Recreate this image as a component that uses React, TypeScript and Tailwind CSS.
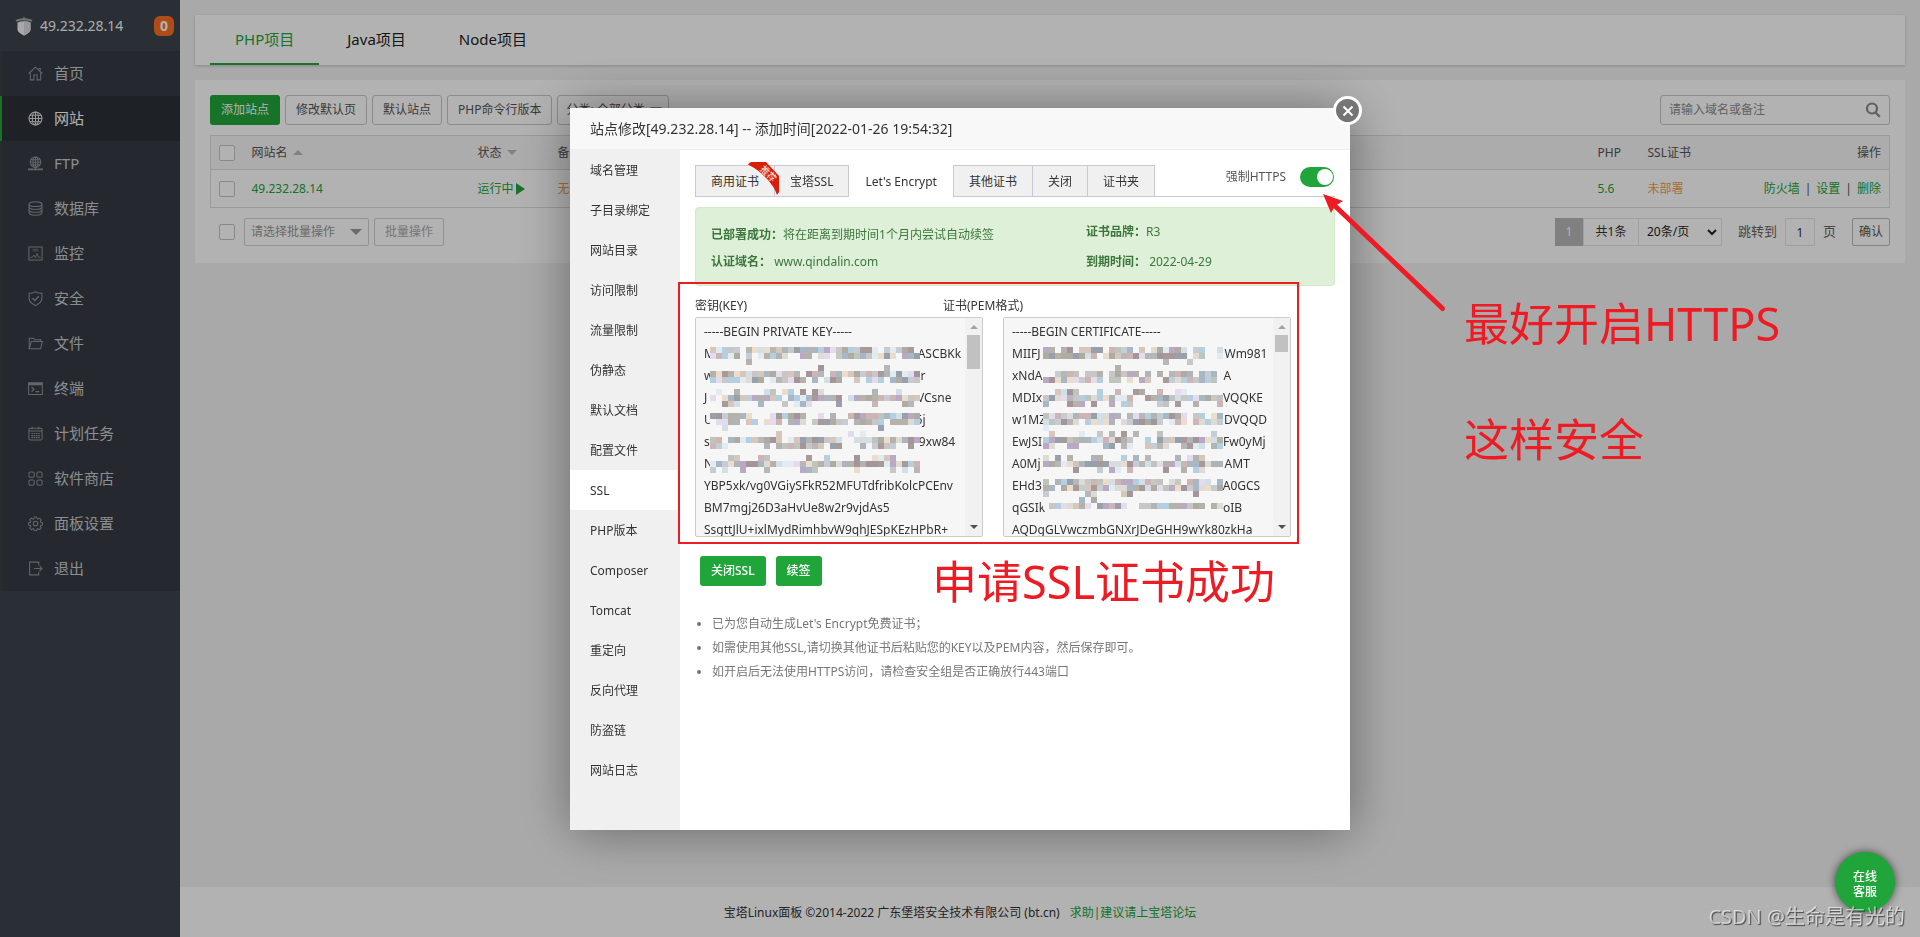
import React from "react";

const FONT = "font-['Noto_Sans','Noto_Sans_CJK_SC',sans-serif]";

const iconPaths: Record<string, React.ReactNode> = {
  home: (
    <>
      <path d="M0.7 8 8 1.2 15.3 8" />
      <path d="M2.5 7v7.8h3.8V9.6h3.4v5.2h3.8V7" />
      <path d="M11.3 2.6h1.7v2.2" />
    </>
  ),
  globe: (
    <>
      <circle cx="8" cy="8" r="6.9" />
      <ellipse cx="8" cy="8" rx="3.4" ry="6.9" />
      <path d="M8 1v14M1 8h14M2.2 4.6h11.6M2.2 11.4h11.6" />
    </>
  ),
  ftp: (
    <>
      <circle cx="8" cy="6.6" r="5.6" />
      <ellipse cx="8" cy="6.6" rx="2.7" ry="5.6" />
      <path d="M8 1v12.5M2.4 6.6h11.2M3.2 3.9h9.6M3.2 9.4h9.6" />
      <path d="M0 14.3h6M10 14.3h6M6.3 14.3h3.4" strokeWidth="1.8" />
    </>
  ),
  database: (
    <>
      <ellipse cx="8" cy="3.4" rx="6.9" ry="2.5" />
      <path d="M1.1 3.4v9.2c0 1.4 3.1 2.5 6.9 2.5s6.9-1.1 6.9-2.5V3.4" />
      <path d="M1.1 6.5c0 1.4 3.1 2.5 6.9 2.5s6.9-1.1 6.9-2.5M1.1 9.6c0 1.4 3.1 2.5 6.9 2.5s6.9-1.1 6.9-2.5" />
    </>
  ),
  monitor: (
    <>
      <path d="M1 1h14v14H1z" />
      <path d="M5 3.6h6M5 5.2h6" opacity=".5" />
      <path d="M2.5 12h2.300l1.400-2.500 1.800 3 1.700-4.500 1.500 4h2.300" strokeWidth=".9" />
    </>
  ),
  shield: (
    <>
      <path d="M8 .8c2 1.300 4.400 1.700 6.800 1.700v5.300c0 3.600-2.900 6-6.800 7.600-3.900-1.600-6.800-4-6.800-7.600V2.500C3.600 2.500 6 2.100 8 .8z" />
      <path d="m4.800 7.600 2.500 2.600 4.300-4.500" strokeWidth="1.500" />
    </>
  ),
  folder: (
    <>
      <path d="M1.300 13.600V2.500h4.500l1.500 1.600h6.200v1.700" />
      <path d="M1.300 13.600 3.600 5.800h11.800l-2 7.800z" />
    </>
  ),
  terminal: (
    <>
      <path d="M.7 1.800h14.600v12.600H.7z" />
      <path d="M.7 3.300h14.600" strokeWidth="2.600" />
      <path d="m3.800 6.600 2.600 2.300-2.600 2.300M8 11.300h4" strokeWidth="1.300" />
    </>
  ),
  calendar: (
    <>
      <rect x="1" y="2.300" width="14" height="12.600" rx="1.500" />
      <path d="M1 5.400h14M4.500.8v2.600M11.500.8v2.600" />
      <path d="M3.600 8h8.900M3.600 10.200h8.900M3.600 12.400h8.900" strokeWidth="1.300" strokeDasharray="1.700 .7" />
    </>
  ),
  apps: (
    <>
      <rect x="1" y="1" width="5.600" height="5.600" rx="1.400" />
      <rect x="9.500" y="1" width="5.600" height="5.600" rx="1.400" />
      <rect x="1" y="9.500" width="5.600" height="5.600" rx="1.400" />
      <rect x="9.500" y="9.500" width="5.600" height="5.600" rx="1.400" />
    </>
  ),
  gear: (
    <>
      <circle cx="8" cy="8" r="2.500" />
      <path d="M6.800 1h2.400l.5 1.900 1 .4 1.700-1 1.700 1.700-1 1.700.4 1 1.900.5v2.400l-1.900.5-.4 1 1 1.700-1.700 1.700-1.700-1-1 .4-.5 1.900H6.800l-.5-1.900-1-.4-1.700 1-1.700-1.700 1-1.700-.4-1L.6 9.600V7.200l1.900-.5.4-1-1-1.700 1.700-1.700 1.700 1 1-.4z" />
    </>
  ),
  exit: (
    <>
      <path d="M11.500 4.500V1.200H1.700v13.600h9.800v-3.300" />
      <path d="M6.500 8h8.500M12.300 5.300 15 8l-2.700 2.700" />
    </>
  ),
};

const menu = [
  ["home", "首页"],
  ["globe", "网站"],
  ["ftp", "FTP"],
  ["database", "数据库"],
  ["monitor", "监控"],
  ["shield", "安全"],
  ["folder", "文件"],
  ["terminal", "终端"],
  ["calendar", "计划任务"],
  ["apps", "软件商店"],
  ["gear", "面板设置"],
  ["exit", "退出"],
];

function Sidebar() {
  return (
    <aside className="w-[180px] shrink-0 bg-[#3c444d]">
      <div className="flex h-[51px] items-center pr-1.5 pl-[15px]">
        <svg className="h-5 w-[18px]" viewBox="0 0 18 20" aria-hidden="true">
          <path d="M9 .5 10 2.200c2.700.2 5.400.9 7.500 1.900l-1 1.700c-4-1.900-11-1.900-15 0l-1-1.700C2.600 3.100 5.300 2.400 8 2.200z" fill="#a4a8ac" />
          <path d="M2.500 6.500c4-1.600 9-1.600 13 0v6.700c0 2.800-3.200 4.600-6.500 6.300-3.300-1.700-6.500-3.500-6.500-6.300z" fill="#f2f2f2" />
          <path d="M9 5.300c2.300 0 4.500.4 6.500 1.200v6.700c0 2.800-3.200 4.600-6.500 6.300z" fill="#d8dadc" />
        </svg>
        <span className="ml-[7px] flex-1 text-sm leading-5 text-[#f4f4f4]">49.232.28.14</span>
        <span className="flex h-5 w-5 items-center justify-center rounded-md bg-[#fc6d22] text-sm font-bold text-white">0</span>
      </div>
      <nav className="bg-[#353c44]">
        {menu.map(([icon, label]) => (
          <a
            key={label}
            href="#"
            className={
              icon === "globe"
                ? "flex h-[45px] items-center border-l-2 border-[#20a53a] bg-[#2c3138] pl-[26px] text-[15px] text-white"
                : "flex h-[45px] items-center border-l-2 border-[#3c3f40] pl-[26px] text-[15px] text-[#c8cacc]"
            }
          >
            <svg
              className={icon === "globe" ? "h-[15px] w-[15px] text-[#ddd]" : "h-[15px] w-[15px] text-[#8f9294]"}
              viewBox="0 0 16 16"
              fill="none"
              stroke="currentColor"
              strokeWidth="1.1"
              aria-hidden="true"
            >
              {iconPaths[icon]}
            </svg>
            <span className="ml-[11px]">{label}</span>
          </a>
        ))}
      </nav>
    </aside>
  );
}

function Check({ label }: { label: string }) {
  return (
    <input
      type="checkbox"
      aria-label={label}
      className="block h-4 w-4 shrink-0 appearance-none rounded-xs border border-[#c5c5c5] bg-white"
    />
  );
}

const btn = "h-[30px] rounded-[3px] border border-[#c8c8c8] bg-white px-2.5 text-xs text-[#555]";

function SitePanel() {
  return (
    <section className="mt-[15px] bg-white p-[15px] pb-[17px] text-xs text-[#555]">
      <div className="flex items-center gap-[5px]">
        <button className="h-[30px] rounded-[3px] bg-[#20a53a] px-[11px] text-xs text-white">添加站点</button>
        <button className={btn}>修改默认页</button>
        <button className={btn}>默认站点</button>
        <button className={btn}>PHP命令行版本</button>
        <button className="flex h-[30px] w-28 items-center justify-between rounded-[3px] border border-[#c8c8c8] bg-white pr-1.5 pl-2 text-xs text-[#555]">
          分类: 全部分类
          <svg className="h-1.5 w-3" viewBox="0 0 12 6" fill="#888" aria-hidden="true"><path d="M0 0h12L6 6z" /></svg>
        </button>
        <div className="ml-auto flex h-[30px] w-[230px] items-center rounded-[3px] border border-[#c8c8c8] px-2">
          <input aria-label="搜索" placeholder="请输入域名或备注" className="min-w-0 flex-1 bg-transparent text-xs outline-none placeholder:text-[#8c8c8c]" />
          <svg className="h-4 w-4" viewBox="0 0 16 16" fill="none" stroke="#888" strokeWidth="2.200" aria-hidden="true">
            <circle cx="7" cy="6.500" r="5" />
            <path d="m10.500 10.500 4.300 4.300" />
          </svg>
        </div>
      </div>

      <table className="mt-2.5 w-full table-fixed border-collapse border border-[#ddd] text-left">
        <thead>
          <tr className="h-[34px] border-b border-[#ddd] bg-[#f6f6f6]">
            <th className="w-[33px] pl-2"><Check label="全选" /></th>
            <th className="w-[226px] pl-2 font-normal">
              <span className="inline-flex items-center gap-[5px]">网站名
                <svg className="h-[5px] w-2.5" viewBox="0 0 10 5" fill="#bbb" aria-hidden="true"><path d="M0 5h10L5 0z" /></svg>
              </span>
            </th>
            <th className="w-20 pl-2 font-normal">
              <span className="inline-flex items-center gap-[5px]">状态
                <svg className="h-[5px] w-2.5" viewBox="0 0 10 5" fill="#bbb" aria-hidden="true"><path d="M0 0h10L5 5z" /></svg>
              </span>
            </th>
            <th className="pl-2 font-normal">备注</th>
            <th className="w-[50px] pl-2 font-normal">PHP</th>
            <th className="w-[90px] pl-2 font-normal">SSL证书</th>
            <th className="w-40 pr-2 text-right font-normal">操作</th>
          </tr>
        </thead>
        <tbody>
          <tr className="h-[38px] text-[#20a53a]">
            <td className="pl-2"><Check label="选择 49.232.28.14" /></td>
            <td className="pl-2"><a href="#">49.232.28.14</a></td>
            <td className="pl-2">
              <a href="#" className="inline-flex items-center gap-0.5">运行中
                <svg className="h-3 w-[9px]" viewBox="0 0 9 12" fill="#20a53a" aria-hidden="true"><path d="M0 0v12l9-6z" /></svg>
              </a>
            </td>
            <td className="pl-2 text-[#e8a04c]">无备注</td>
            <td className="pl-2"><a href="#">5.6</a></td>
            <td className="pl-2"><a href="#" className="text-[#f0a04a]">未部署</a></td>
            <td className="pr-2">
              <div className="flex justify-end gap-[5px]">
                <a href="#">防火墙</a><span className="text-[#555]">|</span><a href="#">设置</a><span className="text-[#555]">|</span><a href="#">删除</a>
              </div>
            </td>
          </tr>
        </tbody>
      </table>

      <div className="mt-2.5 flex items-center">
        <div className="flex items-center gap-[5px] pl-[9px]">
          <Check label="批量选择" />
          <div className="relative ml-1">
            <select aria-label="批量操作" className="h-7 w-[125px] appearance-none rounded-xs border border-[#d0d0d0] bg-white pl-1.5 text-xs text-[#999]">
              <option>请选择批量操作</option>
            </select>
            <svg className="pointer-events-none absolute top-[11px] right-[7px] h-1.5 w-3" viewBox="0 0 12 6" fill="#999" aria-hidden="true"><path d="M0 0h12L6 6z" /></svg>
          </div>
          <button className="h-7 w-[70px] rounded-xs border border-[#d0d0d0] bg-white text-xs text-[#aaa]">批量操作</button>
        </div>
        <div className="ml-auto flex h-7 items-center text-[#333]">
          <span className="flex h-7 w-7 items-center justify-center bg-[#b8b8b8] text-white">1</span>
          <span className="flex h-7 w-[55px] items-center justify-center border border-r-0 border-[#e6e6e6] text-xs">共1条</span>
          <div className="relative">
            <select aria-label="每页条数" className="h-7 w-[84px] appearance-none border border-[#e6e6e6] bg-white pl-2 text-xs text-[#222]">
              <option>20条/页</option>
            </select>
            <svg className="pointer-events-none absolute top-[11px] right-[5px] h-[7px] w-2.5" viewBox="0 0 10 7" fill="none" stroke="#222" strokeWidth="2" aria-hidden="true"><path d="m1 1 4 4 4-4" /></svg>
          </div>
          <label htmlFor="page" className="ml-4 text-[13px] text-[#666]">跳转到</label>
          <input id="page" defaultValue="1" className="mx-2 h-7 w-[30px] border border-[#e6e6e6] text-center text-xs" />
          <span className="text-[13px] text-[#666]">页</span>
          <button className="ml-4 h-7 w-[38px] rounded-xs border border-[#bbb] bg-white text-xs text-[#555]">确认</button>
        </div>
      </div>
    </section>
  );
}

const gap = (head: string, spaces: number, tail: string) => head + " ".repeat(spaces) + tail;

const keyText = [
  "-----BEGIN PRIVATE KEY-----",
  gap("M", 65, "ASCBKk"),
  gap("w", 64, "Kr"),
  gap("J", 65, "4VCsne"),
  gap("U", 65, "6j"),
  gap("s", 67, "9xw84"),
  "N",
  "YBP5xk/vg0VGiySFkR52MFUTdfribKolcPCEnv",
  "BM7mgj26D3aHvUe8w2r9vjdAs5",
  "SsgttJlU+ixlMydRimhbvW9qhJESpKEzHPbR+",
].join("\n");

const certText = [
  "-----BEGIN CERTIFICATE-----",
  gap("MIIFJ", 59, "Wm981"),
  gap("xNdA", 58, "A"),
  gap("MDIx", 58, "VQQKE"),
  gap("w1MZ", 57, "DVQQD"),
  gap("EwJSI", 58, "Fw0yMj"),
  gap("A0Mj", 59, "AMT"),
  gap("EHd3", 58, "A0GCS"),
  gap("qGSIk", 57, "oIB"),
  "AQDgGLVwczmbGNXrJDeGHH9wYk80zkHa",
].join("\n");

const palette = [
  "#aeb4b8", "#c9c6c6", "#b9a9c4", "#d3dfe6", "#a89a98", "#ecdccb", "#98a1ab", "#b5b2ab", "#b4d0e0", "#dedad4",
  "#a3959a", "#c5ccd3", "#b7b7b7", "#e2ecf0", "#d6c6bb", "#a7b7c4", "#e4dcec", "#aeaba3", "#cfb4b6", "#bfc4bd",
];

// Grid row and coverage of every cell row that hides a line of text.
const cellRows: [number, number][] = [
  [0, 0.85], [1, 0.9], [2, 0.06],
  [3, 0.12], [4, 0.85], [5, 0.8],
  [7, 0.35], [8, 0.96], [9, 0.3],
  [11, 0.8], [12, 0.85], [13, 0.05],
  [14, 0.2], [15, 0.9], [16, 0.5],
  [18, 0.35], [19, 0.96], [20, 0.3],
  [22, 0.8], [23, 0.92], [24, 0.15],
  [25, 0.12], [26, 0.92], [27, 0.1],
];

function Mosaic({ columns, lastRow, seed }: { columns: number; lastRow: number; seed: number }) {
  let state = seed;
  const random = () => {
    state = (state * 1103515245 + 12345) % 2147483648;
    return state / 2147483648;
  };
  const cells: React.ReactNode[] = [];
  cellRows.forEach(([row, coverage]) => {
    for (let column = 0; column < columns; column++) {
      const filled = random() < coverage;
      const color = palette[Math.floor(random() * palette.length)];
      if (filled && row <= lastRow) {
        cells.push(<rect key={`${row}-${column}`} x={column * 6} y={row * 6} width="6" height="6" fill={color} />);
      }
    }
  });
  return (
    <svg width={columns * 6} height={(lastRow + 1) * 6} shapeRendering="crispEdges" aria-hidden="true">
      <rect width="100%" height="100%" fill="#f6f6f6" />
      {cells}
    </svg>
  );
}

function KeyBox({ id, text, children, long }: { id: string; text: string; children: React.ReactNode; long?: boolean }) {
  return (
    <div className="relative flex h-[220px] w-72 overflow-hidden rounded-xs border border-[#ccc] bg-[#f6f6f6]">
      <textarea
        id={id}
        wrap="off"
        defaultValue={text}
        className="min-w-0 flex-1 resize-none overflow-hidden bg-transparent py-[3px] pl-2 text-xs leading-[22px] text-[#333] outline-none"
      />
      <div className="flex w-[17px] shrink-0 flex-col items-center justify-between bg-[#f1f1f1] pt-[7px] pb-[7px]">
        <div className="flex flex-col items-center gap-[6px]">
          <svg className="h-1 w-2" viewBox="0 0 8 4" fill="#a3a3a3" aria-hidden="true"><path d="M0 4h8L4 0z" /></svg>
          <div className={long ? "h-[34px] w-[13px] bg-[#c1c1c1]" : "h-[17px] w-[13px] bg-[#c1c1c1]"} />
        </div>
        <svg className="h-1 w-2" viewBox="0 0 8 4" fill="#505050" aria-hidden="true"><path d="M0 0h8L4 4z" /></svg>
      </div>
      {children}
    </div>
  );
}

const settings = [
  "域名管理", "子目录绑定", "网站目录", "访问限制", "流量限制", "伪静态", "默认文档", "配置文件",
  "SSL", "PHP版本", "Composer", "Tomcat", "重定向", "反向代理", "防盗链", "网站日志",
];

const certTabs = ["商用证书", "宝塔SSL", "Let's Encrypt", "其他证书", "关闭", "证书夹"];

function Dialog() {
  return (
    <div role="dialog" aria-label="站点修改" className="relative w-[780px] bg-white text-xs text-[#333] shadow-[1px_1px_50px_rgba(0,0,0,0.4)]">
      <h2 className="flex h-[42px] items-center border-b border-[#eee] bg-[#f8f8f8] px-5 text-sm text-[#333]">
        站点修改[49.232.28.14] -- 添加时间[2022-01-26 19:54:32]
      </h2>
      <button aria-label="关闭窗口" className="absolute -top-3 -right-3 flex h-[29px] w-[29px] items-center justify-center rounded-full border-3 border-white bg-[#757575]">
        <svg className="h-3 w-3" viewBox="0 0 12 12" stroke="#fff" strokeWidth="2" aria-hidden="true"><path d="m1.500 1.500 9 9M10.500 1.500l-9 9" /></svg>
      </button>

      <div className="flex">
        <nav className="w-[110px] shrink-0 bg-[#f0f0f0] pb-10">
          {settings.map((item) => (
            <a key={item} href="#" className={item === "SSL" ? "flex h-10 items-center bg-white pt-0.5 pl-5" : "flex h-10 items-center pt-0.5 pl-5"}>{item}</a>
          ))}
        </nav>

        <div className="flex-1 p-[15px]">
          <div className="flex h-8 border-b border-[#cac7d8]">
            {certTabs.map((tab, i) => (
              <button
                key={tab}
                className={
                  i === 2
                    ? "h-8 bg-white px-4 pt-0.5 text-[#333]"
                    : i === 0 || i === 3
                      ? "relative h-8 border border-[#cac7d8] bg-[#f0f0f0] px-[15px] pt-0.5 text-[#333]"
                      : "h-8 border border-l-0 border-[#cac7d8] bg-[#f0f0f0] px-[15px] pt-0.5 text-[#333]"
                }
              >
                {tab}
                {i === 0 && (
                  <svg className="absolute -top-1 -right-1.5 z-10" width="32" height="33" viewBox="0 0 32 33" aria-hidden="true">
                    <path d="M0 2.500C1 1 2 0 4 0h14l13 14v16l-2 3C26 22 12 8 0 2.500z" fill="#d81e06" />
                    <text x="20.500" y="11.500" transform="rotate(45 20.500 11.500)" textAnchor="middle" dominantBaseline="central" fontSize="9" fill="#fff">推荐</text>
                  </svg>
                )}
              </button>
            ))}
            <label className="ml-auto flex h-6 items-center gap-3.5 pr-px text-[#555]">
              强制HTTPS
              <span className="relative block h-5 w-[34px]">
                <input type="checkbox" defaultChecked className="block h-5 w-[34px] appearance-none rounded-full bg-[#20a53a]" />
                <span className="pointer-events-none absolute top-0.5 right-px h-4 w-4 rounded-full bg-white" />
              </span>
            </label>
          </div>

          <div className="mt-2.5 flex h-[79px] rounded border border-[#d6e9c6] bg-[#dff0d8] pt-[13px] pl-[15px] text-[#3c763d]">
            <div className="w-[375px] leading-[27px]">
              <p><b>已部署成功：</b>将在距离到期时间1个月内尝试自动续签</p>
              <p><b>认证域名：</b> www.qindalin.com</p>
            </div>
            <div className="-mt-1 leading-[30px]">
              <p><b>证书品牌：</b>R3</p>
              <p><b>到期时间：</b> 2022-04-29</p>
            </div>
          </div>

          <div className="mt-2 flex h-[23px] items-center">
            <label htmlFor="key" className="w-[248px]">密钥(KEY)</label>
            <label htmlFor="cert">证书(PEM格式)</label>
          </div>
          <div className="flex gap-5">
            <KeyBox id="key" text={keyText} long>
              <div className="pointer-events-none absolute top-[29px] left-[14px]"><Mosaic columns={35} lastRow={20} seed={77} /></div>
            </KeyBox>
            <KeyBox id="cert" text={certText}>
              <div className="pointer-events-none absolute top-[29px] left-[39px]"><Mosaic columns={30} lastRow={26} seed={98311} /></div>
            </KeyBox>
          </div>

          <div className="mt-[19px] flex gap-2.5 pl-[5px]">
            <button className="h-[30px] rounded-[3px] bg-[#20a53a] px-[11px] text-xs font-medium text-white">关闭SSL</button>
            <button className="h-[30px] rounded-[3px] bg-[#20a53a] px-[11px] text-xs font-medium text-white">续签</button>
          </div>
          <ul className="mt-[26px] list-disc pl-[17px] leading-6 text-[#777]">
            <li>已为您自动生成Let's Encrypt免费证书；</li>
            <li>如需使用其他SSL,请切换其他证书后粘贴您的KEY以及PEM内容，然后保存即可。</li>
            <li>如开启后无法使用HTTPS访问，请检查安全组是否正确放行443端口</li>
          </ul>
        </div>
      </div>

      <div className="pointer-events-none absolute top-[174px] left-[108px] h-[262px] w-[621px] border-2 border-[#ed1c24]" />
      <p className="pointer-events-none absolute top-[444px] left-[362px] text-[45px] leading-[60px] whitespace-nowrap text-[#ed1c24]">申请SSL证书成功</p>
      <svg className="pointer-events-none absolute top-[84px] left-[750px]" width="130" height="124" viewBox="0 0 130 124" aria-hidden="true">
        <path d="m14 13 108.500 103.500" stroke="#ed1c24" strokeWidth="5" strokeLinecap="round" />
        <path d="m3 2 20 7-8 5-4 7z" fill="#ed1c24" />
      </svg>
      <div className="pointer-events-none absolute top-[158px] left-[894px] text-[45px] leading-[116px] whitespace-nowrap text-[#ed1c24]">
        <p>最好开启HTTPS</p>
        <p>这样安全</p>
      </div>
    </div>
  );
}

export default function App() {
  return (
    <div className={`${FONT} flex min-h-screen overflow-hidden bg-[#f3f3f3]`}>
      <Sidebar />
      <div className="flex min-w-0 flex-1 flex-col">
        <main className="p-[15px]">
          <div className="flex h-[50px] gap-[3px] bg-white px-[15px] text-[15px] text-[#222] shadow-[0_1px_3px_rgba(0,0,0,0.2)]">
            <button className="border-b-2 border-[#20a53a] px-[25px] text-[#20a53a]">PHP项目</button>
            <button className="border-b-2 border-transparent px-[25px]">Java项目</button>
            <button className="border-b-2 border-transparent px-[25px]">Node项目</button>
          </div>
          <SitePanel />
        </main>
        <footer className="mt-auto flex h-[50px] items-center justify-center gap-2.5 bg-white pt-0.5 pr-[180px] text-xs text-[#333]">
          <span>宝塔Linux面板 ©2014-2022 广东堡塔安全技术有限公司 (bt.cn)</span>
          <a href="#" className="text-[#20a53a]">求助|建议请上宝塔论坛</a>
        </footer>
      </div>

      <div className="fixed inset-0 flex items-start justify-center bg-black/30 pt-[108px]">
        <Dialog />
      </div>

      <button className="fixed right-[25px] bottom-[25px] h-[60px] w-[60px] rounded-full bg-[#20a53a] px-4 pt-1 text-xs leading-[15px] font-medium text-white shadow-[0_0_8px_rgba(0,0,0,0.6)]">
        在线客服
      </button>
      <p className="pointer-events-none fixed right-[15px] bottom-1.5 text-[20px] leading-7 text-white/60 [text-shadow:1px_1px_1px_rgba(0,0,0,0.6)]">
        CSDN @生命是有光的
      </p>
    </div>
  );
}
